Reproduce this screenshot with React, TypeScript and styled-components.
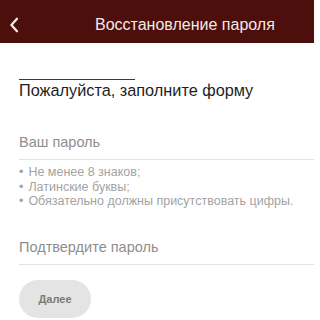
import React from 'react';
import styled, { createGlobalStyle } from 'styled-components';

const GlobalStyle = createGlobalStyle`
    html, body {
        margin: 0;
        padding: 0;
        background: #ffffff;
        font-family: "Liberation Sans", Arial, sans-serif;
    }
`;

const rules = [
    'Не менее 8 знаков;',
    'Латинские буквы;',
    'Обязательно должны присутствовать цифры.',
];

const App = () => {
    return (
        <Page>
            <GlobalStyle />
            <Header>
                <BackButton aria-label="Назад">
                    <svg width="10" height="16" viewBox="0 0 10 16">
                        <path d="M8 1.8 L2.4 8 L8 14.2" fill="none" stroke="#f3e9e6" strokeWidth="2.3" strokeLinecap="round" strokeLinejoin="round" />
                    </svg>
                </BackButton>
                <Title>Восстановление пароля</Title>
            </Header>

            <Content>
                <TitleRule />
                <Heading>Пожалуйста, заполните форму</Heading>

                <Field>
                    <Placeholder>Ваш пароль</Placeholder>
                </Field>
                <Rules>
                    {rules.map((rule) => (
                        <Rule key={rule}>{rule}</Rule>
                    ))}
                </Rules>

                <Field $confirm>
                    <Placeholder>Подтвердите пароль</Placeholder>
                </Field>

                <NextButton>Далее</NextButton>
            </Content>
        </Page>
    );
};

export default App;

// Styled Components
const Page = styled.div`
    width: 314px;
    height: 320px;
    overflow: hidden;
    background: #ffffff;
`;

const Header = styled.div`
    display: flex;
    align-items: center;
    height: 43px;
    padding: 6px 0 0 9px;
    background-color: #4d0f0b;
    box-sizing: border-box;
`;

const BackButton = styled.button`
    display: flex;
    align-items: center;
    padding: 0;
    background: none;
    border: none;
    cursor: pointer;
`;

const Title = styled.h1`
    margin: 0 0 0 76px;
    font-size: 16px;
    line-height: 20px;
    font-weight: normal;
    color: #f3e9e6;
    white-space: nowrap;
`;

const Content = styled.div`
    display: flex;
    flex-direction: column;
    align-items: flex-start;
    padding: 36px 0 0 19px;
`;

const TitleRule = styled.div`
    width: 116px;
    height: 1px;
    background-color: #3a3a3a;
`;

const Heading = styled.h2`
    margin: 0;
    font-size: 16.3px;
    line-height: 20px;
    font-weight: normal;
    color: #1e1e1e;
    white-space: nowrap;
`;

const Field = styled.div<{ $confirm?: boolean }>`
    align-self: stretch;
    margin-top: ${(p) => (p.$confirm ? '29.5px' : '33px')};
    padding-bottom: 8px;
    border-bottom: 1px solid #e2e2e2;
`;

const Placeholder = styled.div`
    font-size: 14.5px;
    line-height: 18px;
    color: #8e8e8e;
`;

const Rules = styled.ul`
    list-style: none;
    margin: 5px 0 0;
    padding: 0;
`;

const Rule = styled.li`
    font-size: 12.5px;
    line-height: 14.5px;
    color: #a3a3a3;
    white-space: nowrap;

    &::before {
        content: '•';
        margin-right: 5px;
    }
`;

const NextButton = styled.button`
    margin-top: 15px;
    width: 72px;
    height: 38px;
    border: none;
    border-radius: 19px;
    background-color: #e4e4e4;
    color: #7a7a7a;
    font-family: "Liberation Sans", Arial, sans-serif;
    font-size: 11px;
    font-weight: bold;
    cursor: pointer;
`;
